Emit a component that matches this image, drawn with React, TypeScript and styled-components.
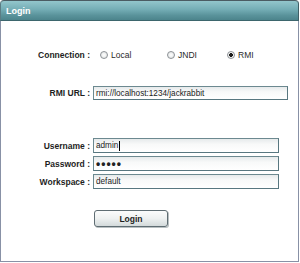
import React from "react";
import styled, { createGlobalStyle } from "styled-components";

const Global = createGlobalStyle`
  html, body { margin: 0; padding: 0; background: #ffffff; }
  body { font-family: "Liberation Sans", Arial, sans-serif; }
`;

const Panel = styled.div`
  width: 299px;
  display: flex;
  flex-direction: column;
`;

const TitleBar = styled.div`
  height: 19px;
  box-sizing: content-box;
  border-top: 1px solid #4b5c63;
  border-bottom: 1px solid #3d666d;
  border-right: 1px solid #3f5f66;
  border-left: 1px solid #5b7d84;
  border-radius: 4px 4px 0 0;
  background: linear-gradient(#93c6cc 0%, #74adb5 45%, #5a939b 75%, #4c848c 100%);
  display: flex;
  align-items: center;
  padding-left: 5px;
  color: #ffffff;
  font-weight: bold;
  font-size: 9px;
  margin-right: 0;
`;

const Body = styled.div`
  height: 240px;
  border: 1px solid #8891a6;
  border-top: none;
  background: #ffffff;
  display: flex;
  flex-direction: column;
`;

const Row = styled.div<{ $top: number; $h: number }>`
  display: grid;
  grid-template-columns: 89px 1fr;
  column-gap: 3px;
  align-items: center;
  height: ${(p) => p.$h}px;
  margin-top: ${(p) => p.$top}px;
`;

const Label = styled.div`
  text-align: right;
  font-weight: bold;
  font-size: 8.5px;
  color: #1e1e1e;
  white-space: nowrap;
`;

const Options = styled.div`
  display: grid;
  grid-template-columns: 67px 60px auto;
  padding-left: 7px;
  align-items: center;
`;

const Option = styled.label`
  display: flex;
  align-items: center;
  gap: 3px;
  font-size: 8.5px;
  color: #2a2a2a;
`;

const RadioDot = styled.span<{ $checked?: boolean }>`
  width: 6px;
  height: 6px;
  border-radius: 50%;
  border: 1px solid #8d9296;
  background: radial-gradient(circle at 50% 50%, ${(p) => (p.$checked ? "#1e1e1e 0, #1e1e1e 1.6px, " : "")}#ffffff ${(p) => (p.$checked ? "2.2px" : "0")}, #dcdfe0 100%);
  display: inline-block;
`;

const Field = styled.div<{ $w: number }>`
  width: ${(p) => p.$w}px;
  height: 100%;
  box-sizing: border-box;
  border: 1px solid #6c8990;
  border-bottom-color: #587780;
  border-right-color: #587780;
  background: linear-gradient(#e6eaeb 0%, #f8f9f9 40%, #ffffff 100%);
  display: flex;
  align-items: center;
  padding-left: 2px;
  font-size: 8.2px;
  color: #222;
  white-space: nowrap;
`;

const Caret = styled.span`
  display: inline-block;
  width: 1px;
  height: 10px;
  background: #000;
  margin-left: 1px;
`;

const Dots = styled.span`
  font-size: 12px;
  font-weight: bold;
  letter-spacing: 1px;
  line-height: 1;
  color: #222;
`;

const Credentials = styled.div`
  display: flex;
  flex-direction: column;
  gap: 3px;
  margin-top: 38px;
`;

const ButtonRow = styled.div`
  display: grid;
  grid-template-columns: 89px 1fr;
  column-gap: 4px;
  margin-top: 21px;
`;

const LoginButton = styled.button`
  grid-column: 2;
  width: 74px;
  height: 17px;
  border: 1px solid #5f6d73;
  border-radius: 3px;
  background: linear-gradient(#fbfcfc 0%, #eef1f1 50%, #d3dadb 100%);
  box-shadow: 1px 1px 0 #b9c0c2;
  font-family: "Liberation Sans", Arial, sans-serif;
  font-weight: bold;
  font-size: 8.5px;
  color: #1e1e1e;
  padding: 0;
`;

export default function App() {
  return (
    <>
      <Global />
      <Panel>
        <TitleBar>Login</TitleBar>
        <Body>
          <Row $top={27} $h={14}>
            <Label>Connection :</Label>
            <Options>
              <Option>
                <RadioDot />
                Local
              </Option>
              <Option>
                <RadioDot />
                JNDI
              </Option>
              <Option>
                <RadioDot $checked />
                RMI
              </Option>
            </Options>
          </Row>
          <Row $top={24} $h={14}>
            <Label>RMI URL :</Label>
            <Field $w={195}>rmi://localhost:1234/jackrabbit</Field>
          </Row>
          <Credentials>
            <Row $top={0} $h={15}>
              <Label>Username :</Label>
              <Field $w={186}>
                admin
                <Caret />
              </Field>
            </Row>
            <Row $top={0} $h={15}>
              <Label>Password :</Label>
              <Field $w={186}>
                <Dots>•••••</Dots>
              </Field>
            </Row>
            <Row $top={0} $h={15}>
              <Label>Workspace :</Label>
              <Field $w={186}>default</Field>
            </Row>
          </Credentials>
          <ButtonRow>
            <LoginButton>Login</LoginButton>
          </ButtonRow>
        </Body>
      </Panel>
    </>
  );
}
